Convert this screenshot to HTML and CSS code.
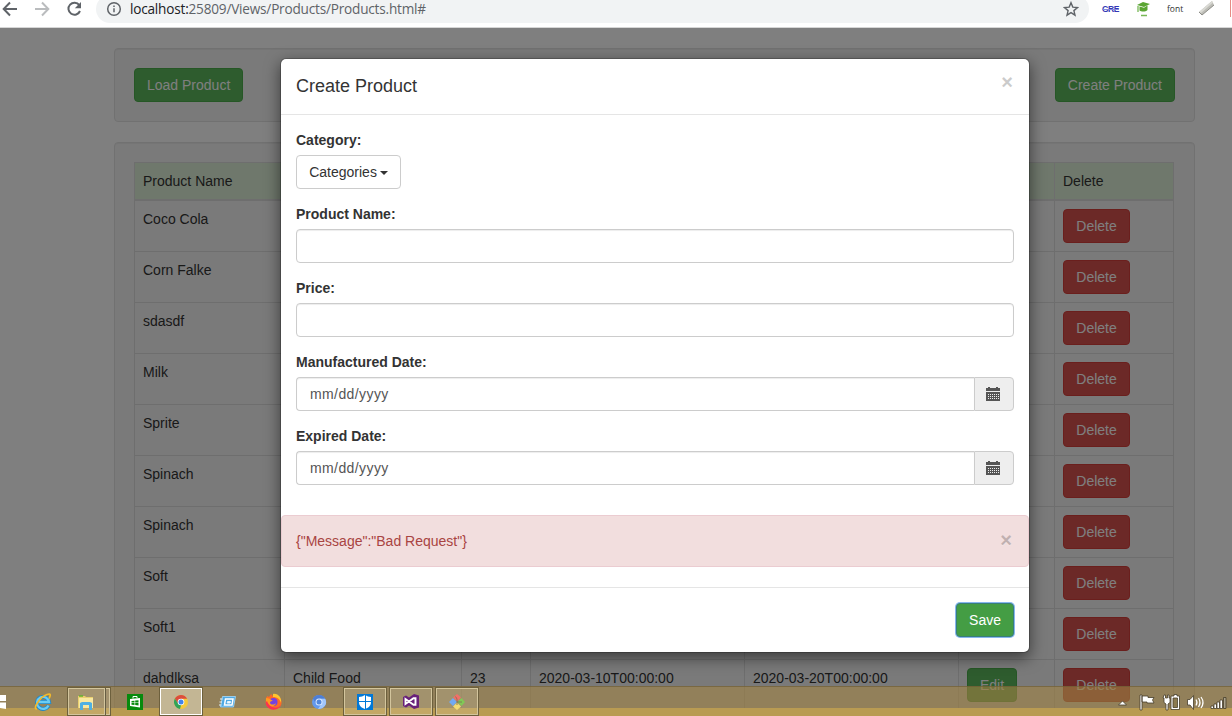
FILE: index.html
```html
<!DOCTYPE html>
<html lang="en">
<head>
<meta charset="utf-8">
<title>Products</title>
<link rel="stylesheet" href="styles.css">
</head>
<body>
<div class="screen">
  <header class="toolbar">
    <div class="nav">
      <svg width="96" height="20" viewBox="0 0 96 20" fill="none" stroke-width="2">
        <path d="M17 9H4M10 2.500L3.700 9l6.300 6.500" stroke="#5f6368"/>
        <path d="M35 9h13M42 2.500L48.300 9 42 15.500" stroke="#babcbe"/>
        <path d="M79.300 5.200A6 6 0 1 0 80 11" stroke="#5f6368"/>
        <path d="M81 2v6.200h-6.200z" fill="#5f6368"/>
      </svg>
    </div>
    <div class="omnibox">
      <svg class="info" width="16" height="16" viewBox="0 0 16 16" fill="none" stroke="#5f6368" stroke-width="1.500"><circle cx="8" cy="8" r="6.300"/><path d="M8 7.200v4M8 4.500v1.600"/></svg>
      <span class="url"><span class="host">localhost:</span>25809/Views/Products/Products.html#</span>
      <svg class="star" width="16" height="16" viewBox="0 0 16 16" fill="none" stroke="#5f6368" stroke-width="1.400"><path d="M8 1.700l1.800 4.400 4.700.400-3.600 3.100 1.100 4.600L8 11.700l-4 2.500 1.100-4.600L1.500 6.500l4.700-.400z"/></svg>
    </div>
    <div class="extensions">
      <span class="gre">GRE</span>
      <svg class="cap" width="16" height="18" viewBox="0 0 16 18"><path d="M1 4l6-3 7 2-6 3z" fill="#5aa532"/><path d="M3.500 5.500v4c2 1.500 6 1.500 8-.500V4.500L8 6.800z" fill="#5aa532"/><path d="M2 5v6M5 14.500h6" stroke="#78b856" stroke-width="1.300"/></svg>
      <span class="font-ext">font</span>
      <svg class="ruler" width="18" height="18" viewBox="0 0 18 18"><path d="M1 12L14 1l2 4L4 15z" fill="#bdbdb7"/><path d="M1 12l13-11 1 1.500L3 13z" fill="#dadad4"/><path d="M1 12l3 3L16 5" fill="none" stroke="#8d8d87"/></svg>
      <i class="cut"></i>
    </div>
  </header>

  <main class="page">
    <section class="well actions"><button class="btn green">Load Product</button><button class="btn green">Create Product</button></section>
    <section class="well">
      <table class="products">
        <colgroup><col class="c1"><col class="c2"><col class="c3"><col class="c4"><col class="c5"><col class="c6"><col class="c7"></colgroup>
        <thead><tr><th>Product Name</th><th></th><th></th><th></th><th></th><th></th><th>Delete</th></tr></thead>
        <tbody>
          <tr><td>Coco Cola</td><td></td><td></td><td></td><td></td><td></td><td><button class="btn red">Delete</button></td></tr>
          <tr><td>Corn Falke</td><td></td><td></td><td></td><td></td><td></td><td><button class="btn red">Delete</button></td></tr>
          <tr><td>sdasdf</td><td></td><td></td><td></td><td></td><td></td><td><button class="btn red">Delete</button></td></tr>
          <tr><td>Milk</td><td></td><td></td><td></td><td></td><td></td><td><button class="btn red">Delete</button></td></tr>
          <tr><td>Sprite</td><td></td><td></td><td></td><td></td><td></td><td><button class="btn red">Delete</button></td></tr>
          <tr><td>Spinach</td><td></td><td></td><td></td><td></td><td></td><td><button class="btn red">Delete</button></td></tr>
          <tr><td>Spinach</td><td></td><td></td><td></td><td></td><td></td><td><button class="btn red">Delete</button></td></tr>
          <tr><td>Soft</td><td></td><td></td><td></td><td></td><td></td><td><button class="btn red">Delete</button></td></tr>
          <tr><td>Soft1</td><td></td><td></td><td></td><td></td><td></td><td><button class="btn red">Delete</button></td></tr>
          <tr><td>dahdlksa</td><td>Child Food</td><td>23</td><td>2020-03-10T00:00:00</td><td>2020-03-20T00:00:00</td><td><button class="btn green">Edit</button></td><td><button class="btn red">Delete</button></td></tr>
        </tbody>
      </table>
    </section>

    <div class="backdrop">
      <div class="modal">
        <div class="modal-header"><h4>Create Product</h4><span class="close">×</span></div>
        <div class="modal-body">
          <div class="group"><label>Category:</label><button class="btn plain">Categories <i class="caret"></i></button></div>
          <div class="group"><label>Product Name:</label><div class="control"></div></div>
          <div class="group"><label>Price:</label><div class="control"></div></div>
          <div class="group"><label>Manufactured Date:</label>
            <div class="date"><div class="control">mm/dd/yyyy</div><div class="addon"><svg width="14" height="14" viewBox="0 0 14 14"><path d="M0 1h2V0h2v1h6V0h2v1h2v3H0zM0 5h14v9H0z" fill="#555"/><path d="M2 7.500h11M2 9.500h11M2 11.500h11" stroke="#eee" stroke-dasharray="1 1"/></svg></div></div></div>
          <div class="group"><label>Expired Date:</label>
            <div class="date"><div class="control">mm/dd/yyyy</div><div class="addon"><svg width="14" height="14" viewBox="0 0 14 14"><path d="M0 1h2V0h2v1h6V0h2v1h2v3H0zM0 5h14v9H0z" fill="#555"/><path d="M2 7.500h11M2 9.500h11M2 11.500h11" stroke="#eee" stroke-dasharray="1 1"/></svg></div></div></div>
        </div>
        <div class="alert"><span>{"Message":"Bad Request"}</span><span class="close">×</span></div>
        <div class="modal-footer"><button class="btn save">Save</button></div>
      </div>
    </div>
  </main>

  <footer class="taskbar">
    <div class="start"><svg width="6" height="14" viewBox="0 0 6 14"><path d="M0 0h6v6H0zM0 7.500h6V14l-6-1z" fill="#fff"/></svg></div>
    <div class="task"><svg width="18" height="18" viewBox="0 0 18 18" fill="none"><path d="M14.500 12.500A6 6 0 1 1 15 9H5" stroke="#2188c8" stroke-width="4"/><path d="M14.500 12.500A6 6 0 1 1 15 9H5" stroke="#6accf5" stroke-width="2.300"/><path d="M3 16C-2 16 6 4 13 1.500c5-1.700 3 2 2 4" stroke="#f2b92c" stroke-width="1.700"/></svg></div>
    <div class="task stack open"><svg width="18" height="16" viewBox="0 0 18 16"><path d="M1 2h7l1 1h7v11H1z" fill="#e9cf6f"/><path d="M2 4h14v10H2z" fill="#f8e8a0"/><path d="M2 2h4" stroke="#63b52e" stroke-width="1.500"/><path d="M3 16V9l2-1h8l2 1v7h-3v-5H6v5z" fill="#4fb0e2"/></svg></div>
    <div class="task"><svg width="16" height="16" viewBox="0 0 16 16"><path d="M0 0h16v16H0z" fill="#078a0d"/><path d="M3 5l10-1v9.500L3 12z" fill="#fff"/><path d="M6 4.500V2.500h4V4" fill="none" stroke="#fff"/><path d="M4.500 7l3-.300v1.800h-3zM8.200 6.600l3.300-.400v2.300H8.200zM4.500 9.100h3V11l-3-.300zM8.200 9.100h3.300v2.400l-3.300-.400z" fill="#078a0d"/></svg></div>
    <div class="task open active"><svg width="16" height="16" viewBox="0 0 16 16"><circle cx="8" cy="8" r="7" fill="#f5ca3b"/><path d="M1.900 4.500A7 7 0 0 1 14.200 4.700H8L5 9.700z" fill="#dc4d3e"/><path d="M1.900 4.500L5.200 9.800 8 11.300l-1 3.600A7 7 0 0 1 1.900 4.500" fill="#32a35a"/><circle cx="8" cy="8" r="3.300" fill="#fff"/><circle cx="8" cy="8" r="2.500" fill="#4083ec"/></svg></div>
    <div class="task"><svg width="17" height="14" viewBox="0 0 17 14"><path d="M3.500 1.500h13l-2 10.500H1.500z" fill="#4fa9e4" stroke="#a6dcff" stroke-width=".800"/><path d="M6.500 4h7.500l-1 6H5.500z" fill="none" stroke="#fff" stroke-width="1.500"/><path d="M8.500 6.500h3l-.300 1.500h-3zM1 4h2.500M.500 7H3M0 10h2.500" fill="#fff" stroke="#e3f4ff"/></svg></div>
    <div class="task"><svg width="17" height="17" viewBox="0 0 17 17"><path d="M1 5l1.500-2L4 4l2-3 2 2c5-1 9 2 8.500 7C16 19 1 18 .700 9.500z" fill="#ff6b25"/><path d="M8 1c5-1 9 4 8 9-1-4-4-6-8-6z" fill="#ffc52e"/><circle cx="8.500" cy="9" r="4" fill="#7542df"/><path d="M1 5c3 0 4 1 7 3-1 0-3 0-3 2 1 2 4 2 6 0-1 5-9 5-10-2z" fill="#ff9a20"/><path d="M.700 9.500C1 18 13 19 16 12c-3 4-11 4-14-4z" fill="#fa344f"/></svg></div>
    <div class="task"><svg width="16" height="16" viewBox="0 0 16 16"><circle cx="8" cy="8" r="7" fill="#6399ed"/><path d="M1.900 4.500A7 7 0 0 1 14.200 4.700H8L5 9.700z" fill="#4e7ed4"/><path d="M14.200 4.700A7 7 0 0 1 7 15l4-6-2-4.300z" fill="#a1c6fa"/><circle cx="8" cy="8" r="3.500" fill="#d9e9ff"/><circle cx="8" cy="8" r="2.500" fill="#5288dc"/></svg></div>
    <div class="task open"><svg width="16" height="16" viewBox="0 0 16 16"><path d="M0 0h16v16H0z" fill="#0078d7"/><path d="M2 3q3 0 6-2 3 2 6 2v5c0 4-3 6-6 7-3-1-6-3-6-7z" fill="#fff"/><path d="M8.500 0v16M1 7.500h14" stroke="#0078d7"/></svg></div>
    <div class="task open"><svg width="16" height="15" viewBox="0 0 16 15"><path d="M0 3l3-1.500 3 2L11 0l5 1.500v12L11 15l-5-3.500-3 2L0 12z" fill="#68217a"/><path d="M2.500 5v5L10.500 4.200h2v6.600h-2z" fill="none" stroke="#fff" stroke-width="1.900"/></svg></div>
    <div class="task open"><svg width="16" height="16" viewBox="0 0 16 16"><path d="M4 3.500L8 0l4 3.500L8 7.500z" fill="#f36f68"/><path d="M0 8l4-4 4 4-4 4z" fill="#72a9f2"/><path d="M8.500 8l4-4L16 8l-3.500 4z" fill="#80c956"/><path d="M4 12.500L8 8.500l4 4L8 16z" fill="#f4dc72"/><path d="M6.500 2.500L8 5v6M8 8h5" stroke="#7b7253" stroke-width=".800" fill="none"/></svg></div>
    <div class="tray">
      <svg width="114" height="18" viewBox="0 0 114 18" stroke="#463e2b" stroke-width=".800" fill="#fff">
        <path d="M4.500 12l4-4 4 4z"/>
        <path d="M26 2h2v15h-2zM28 3h6v1.500h6l-1.500 2.500L40 10h-7V9h-5z"/>
        <path d="M50 2h1.500v3h2V2H55v3h1v4.500l-2 1.500v6h-2v-6l-2-1.500V5h-1zM58 3h2V1.500h3V3h2.500v13.500H57V3z"/><path d="M59 5h4.500v9.500H59z" fill="#8b7a50"/>
        <path d="M73.500 6.500H76L79.500 2.500v14L76 12h-2.500z"/>
        <path d="M82 6.500q2 3 0 6M84.500 5q3 4.500 0 9M87 4q4 5.500 0 11" fill="none" stroke="#fff" stroke-width="1.200"/>
        <path d="M97 13h2.500v2.500H97zM100 11h2.500v4.500H100zM103 9h2.500v6.500H103zM106 7h2.500v8.500H106z"/><path d="M109.500 4.500h2.500v11h-2.500z" fill="#aaa28c"/>
      </svg>
    </div>
  </footer>
</div>
</body>
</html>
```
FILE: styles.css
```css
* { box-sizing: border-box; }
body { margin: 0; font: 14px/20px "Liberation Sans", Arial, sans-serif; color: #333; }
.screen { position: relative; width: 1232px; height: 716px; overflow: hidden; background: #ddbd67; }

.toolbar { display: flex; height: 28px; background: #fff; border-bottom: 1px solid #d6d6d6; overflow: hidden; }
.nav { width: 96px; }
.nav svg { display: block; }
.omnibox { display: flex; align-items: center; width: 993px; height: 28px; margin-top: -5px; padding: 0 10px; border-radius: 14px; background: #f1f3f4; }
.url { flex: 1; margin-left: 8px; font-size: 13.6px; letter-spacing: -.2px; font-family: "Open Sans", sans-serif; color: #5f6368; white-space: nowrap; }
.host { color: #202124; }
.extensions { flex: 1; display: flex; align-items: flex-start; height: 27px; }
.gre { width: 17px; margin: 4px 0 0 13px; font: bold 8.5px/10px "Liberation Sans", sans-serif; letter-spacing: -.5px; color: #3338b5; text-decoration: line-through 1px #8588db; }
.cap { margin: 1px 0 0 17px; }
.font-ext { margin: 0 0 0 15px; width: 17px; font: 8.5px/17px "Open Sans", sans-serif; color: #333; }
.ruler { margin: 0 0 0 14px; }
.cut { margin-left: 14px; width: 1px; height: 17px; background: #e68b84; }

.page { position: relative; display: flex; flex-direction: column; gap: 20px; height: 680px; padding: 20px 37px 0 114px; background: #fff; overflow: hidden; }
.well { flex: none; padding: 19px; border: 1px solid #e3e3e3; border-radius: 4px; background: #f5f5f5; box-shadow: inset 0 1px 1px rgba(0, 0, 0, .05); }
.actions { display: flex; justify-content: space-between; }
.btn { height: 34px; padding: 6px 12px; border: 1px solid; border-radius: 4px; font: inherit; color: #fff; }
.green { background: #5cb85c; border-color: #4cae4c; }
.red { width: 67px; background: #d9534f; border-color: #d43f3a; }
.plain { width: 105px; padding: 6px 11px; background: #fff; border-color: #ccc; color: #333; white-space: nowrap; }
.products { width: 1039px; table-layout: fixed; border-collapse: collapse; border: 1px solid #ddd; }
.products th, .products td { height: 51px; padding: 8px; border: 1px solid #ddd; text-align: left; vertical-align: top; font-weight: normal; }
.products th { height: 37px; padding-bottom: 7px; background: #dff0d8; border-bottom-width: 2px; }
.products .btn { display: block; }
.c1 { width: 150px; }
.c2 { width: 177px; }
.c3 { width: 69px; }
.c4, .c5 { width: 214px; }
.c6 { width: 96px; }
.c7 { width: 119px; }

.backdrop { position: absolute; inset: 0; padding: 30px 202px 0 280px; background: rgba(0, 0, 0, .5); }
.modal { height: 595px; border: 1px solid rgba(0, 0, 0, .2); border-radius: 6px; background: #fff; background-clip: padding-box; box-shadow: 0 5px 15px rgba(0, 0, 0, .5); }
.modal-header { display: flex; justify-content: space-between; height: 56px; padding: 14px 15px; border-bottom: 1px solid #e5e5e5; }
.modal-header h4 { margin: 0; font-size: 18px; line-height: 26px; font-weight: 500; }
.close { margin: -1px 1px 0 0; font-size: 20px; line-height: 21px; font-weight: bold; color: #000; opacity: .2; text-shadow: 0 1px 0 #fff; }
.modal-body { height: 400px; padding: 15px; }
.group { height: 59px; margin-bottom: 15px; }
.group label { display: block; margin-bottom: 5px; font-weight: bold; }
.caret { display: inline-block; margin-left: -1px; border: 4px solid transparent; border-top-color: #333; border-bottom: 0; vertical-align: middle; }
.control { height: 34px; padding: 6px 13px; border: 1px solid #ccc; border-radius: 4px; box-shadow: inset 0 1px 1px rgba(0, 0, 0, .075); color: #555; }
.date { display: flex; }
.date .control { flex: 1; border-right: 0; border-radius: 4px 0 0 4px; letter-spacing: .4px; }
.addon { display: flex; align-items: center; width: 40px; padding-left: 11px; border: 1px solid #ccc; border-radius: 0 4px 4px 0; background: #eee; }
.alert { display: flex; justify-content: space-between; height: 52px; margin-bottom: 20px; padding: 15px 15px 15px 14px; border: 1px solid #ebccd1; border-radius: 4px; background: #f2dede; color: #a94442; }
.modal-footer { display: flex; justify-content: flex-end; padding: 15px; border-top: 1px solid #e5e5e5; }
.save { background: #449d44; border-color: #397f79; box-shadow: 0 0 0 1px #86b7ef; }

.taskbar { position: absolute; left: 0; right: 0; top: 686px; height: 30px; display: flex; gap: 2px; background: rgba(161, 131, 68, .6); border-top: 1px solid rgba(105, 88, 50, .6); }
.start { display: flex; align-items: center; width: 19px; }
.task { display: flex; align-items: center; justify-content: center; width: 44px; height: 29px; border: 1px solid transparent; }
.open { border-color: #6d603d; box-shadow: inset 0 0 0 1px #d3c59d; background: rgba(255, 246, 220, .15); }
.stack { position: relative; padding-right: 6px; }
.stack::after { content: ""; position: absolute; right: 4px; top: 0; bottom: 0; width: 1px; background: #665d43; box-shadow: -1px 0 #d3c59d; }
.active { box-shadow: inset 0 0 0 1px #fff; background: #c3b694; }
.tray { margin-left: auto; }
.tray svg { display: block; margin: 6px 4px 0 0; }
```
